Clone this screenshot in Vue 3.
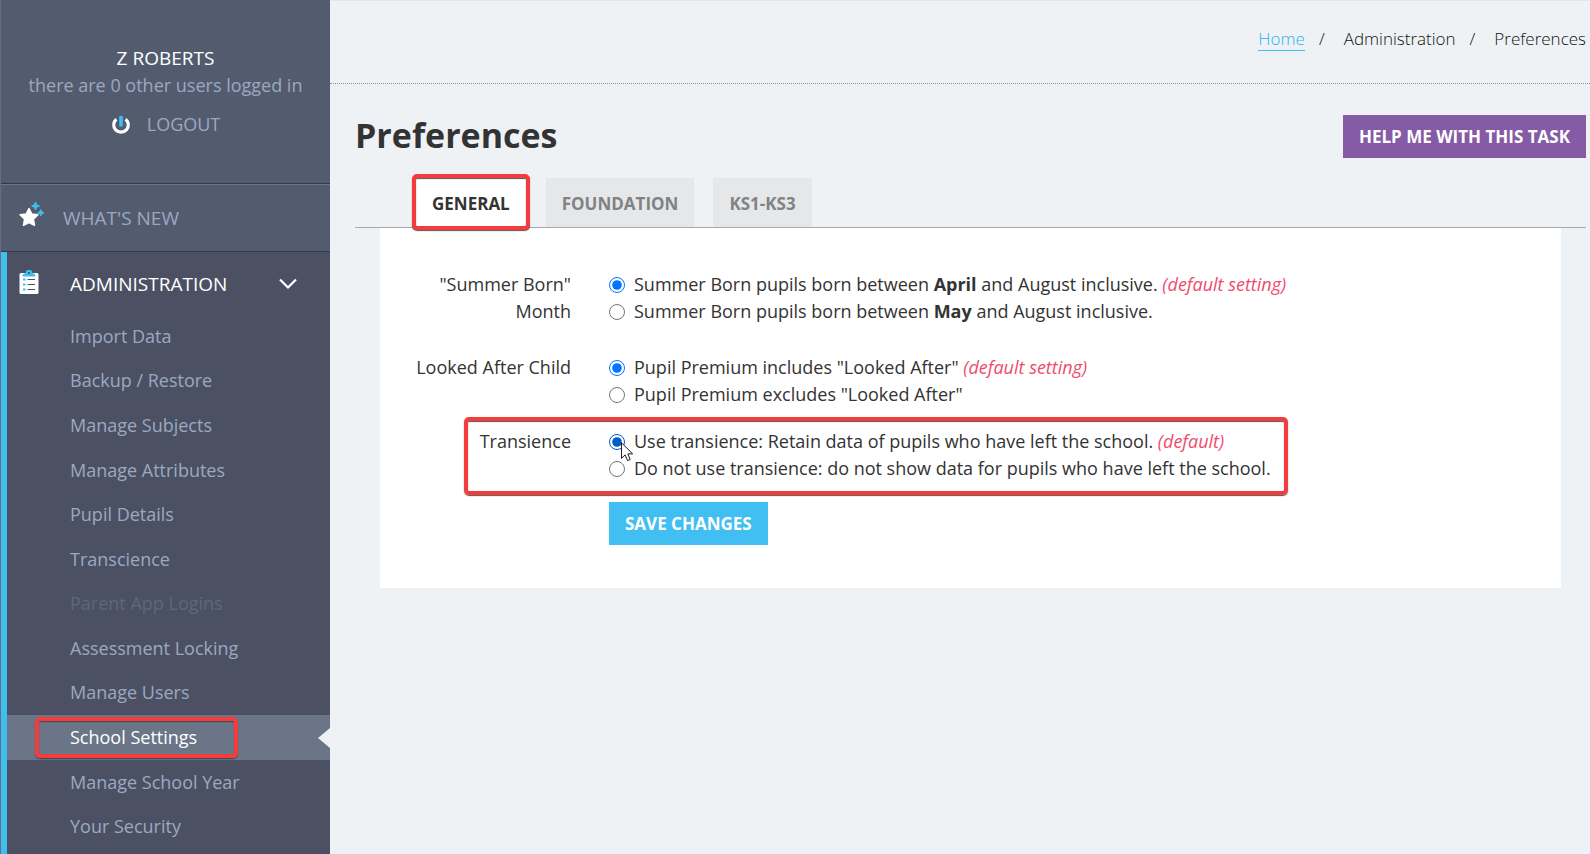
<script setup>
import { ref } from 'vue'

const menu = [
  { label: 'Import Data' },
  { label: 'Backup / Restore' },
  { label: 'Manage Subjects' },
  { label: 'Manage Attributes' },
  { label: 'Pupil Details' },
  { label: 'Transcience' },
  { label: 'Parent App Logins', disabled: true },
  { label: 'Assessment Locking' },
  { label: 'Manage Users' },
  { label: 'School Settings', active: true },
  { label: 'Manage School Year' },
  { label: 'Your Security' },
]

const tabs = ['GENERAL', 'FOUNDATION', 'KS1-KS3']
const activeTab = ref('GENERAL')
const summer = ref('april')
const looked = ref('includes')
const transience = ref('use')
</script>

<template>
  <div class="layout">
    <aside class="sidebar">
      <div class="user">
        <div class="user-name">Z ROBERTS</div>
        <div>there are 0 other users logged in</div>
        <a class="logout" href="#">
          <svg width="20" height="20" viewBox="0 0 20 20" aria-hidden="true">
            <path d="M5.400 4.200a7.300 7.300 0 1 0 9.200 0" fill="none" stroke="#fff" stroke-width="3.200" />
            <path d="M10 1v10.500" fill="none" stroke="#3fbff0" stroke-width="3.600" />
          </svg>
          <span>LOGOUT</span>
        </a>
      </div>

      <a class="news" href="#">
        <svg width="26" height="26" viewBox="0 0 26 26" aria-hidden="true">
          <path d="M10 7.500l2.700 5.400 6.200.9-4.500 4.300 1.100 6.200L10 21.500l-5.500 2.800 1.100-6.200L1.100 13.800l6.200-.9z" fill="#fff" stroke="#fff" stroke-width="1.500" stroke-linejoin="round" />
          <path d="M16.500 1l1.200 2.800 2.800 1.200-2.800 1.200-1.200 2.800-1.200-2.800L12.500 5l2.800-1.200zM21.800 8.600l1 2.200 2.200 1-2.200 1-1 2.200-1-2.200-2.200-1 2.200-1z" fill="#3fbff0" stroke="#3fbff0" />
        </svg>
        <span>WHAT'S NEW</span>
      </a>

      <nav class="admin">
        <button class="admin-head" type="button" aria-expanded="true">
          <svg class="clipboard" width="20" height="26" viewBox="0 0 20 26" aria-hidden="true">
            <rect x="0.500" y="4" width="19" height="21" rx="1.500" fill="#fff" />
            <path d="M3.500 7.500c0-2.300 1.500-3 3.200-3.500a3.300 3.300 0 0 1 6.600 0c1.700.5 3.200 1.200 3.200 3.500z" fill="#3fbff0" />
            <circle cx="10" cy="4" r="1.100" fill="#4b5162" />
            <path d="M8.500 10.500H16M8.500 15.500H16M8.500 20.500H16" stroke="#4b5162" />
            <path d="M4 10.500h2.500M4 15.500h2.500M4 20.500h2.500" stroke="#3fbff0" stroke-width="2.200" />
          </svg>
          <span>ADMINISTRATION</span>
          <svg class="chevron" width="18" height="12" viewBox="0 0 18 12" aria-hidden="true">
            <path d="M1 1.500l8 8 8-8" fill="none" stroke="#fff" stroke-width="2.200" />
          </svg>
        </button>
        <ul class="menu">
          <li v-for="item in menu" :key="item.label" :class="{ active: item.active }">
            <a href="#" :class="{ disabled: item.disabled }">{{ item.label }}</a>
          </li>
        </ul>
      </nav>
    </aside>

    <main class="main">
      <nav class="crumbs" aria-label="Breadcrumb">
        <a href="#">Home</a><span class="slash">/</span>
        <span>Administration</span><span class="slash">/</span>
        <span>Preferences</span>
      </nav>

      <div class="content">
        <header class="title-row">
          <h1>Preferences</h1>
          <button class="button help" type="button">HELP ME WITH THIS TASK</button>
        </header>

        <div class="tabs">
          <button
            v-for="tab in tabs"
            :key="tab"
            type="button"
            :class="['tab', { selected: tab === activeTab }]"
            @click="activeTab = tab"
          >{{ tab }}</button>
        </div>

        <form class="panel" @submit.prevent>
          <div class="row" role="radiogroup" aria-labelledby="summer-label">
            <div id="summer-label" class="row-label">"Summer Born" Month</div>
            <div class="options">
              <label><input v-model="summer" type="radio" name="summer" value="april"><span>Summer Born pupils born between <b>April</b> and August inclusive. <em>(default setting)</em></span></label>
              <label><input v-model="summer" type="radio" name="summer" value="may"><span>Summer Born pupils born between <b>May</b> and August inclusive.</span></label>
            </div>
          </div>
          <div class="row" role="radiogroup" aria-labelledby="looked-label">
            <div id="looked-label" class="row-label">Looked After Child</div>
            <div class="options">
              <label><input v-model="looked" type="radio" name="looked" value="includes"><span>Pupil Premium includes "Looked After" <em>(default setting)</em></span></label>
              <label><input v-model="looked" type="radio" name="looked" value="excludes"><span>Pupil Premium excludes "Looked After"</span></label>
            </div>
          </div>
          <div class="row marked" role="radiogroup" aria-labelledby="transience-label">
            <div id="transience-label" class="row-label">Transience</div>
            <div class="options">
              <label class="hovered"><input v-model="transience" type="radio" name="transience" value="use"><span>Use transience: Retain data of pupils who have left the school. <em>(default)</em></span>
                <svg class="cursor" width="13" height="20" viewBox="0 0 13 20" aria-hidden="true">
                  <path d="M.5.8v15.500l3.600-3.400 2.500 5.700 2.600-1.100-2.400-5.600h4.900z" fill="#fff" stroke="#1a1a2a" />
                </svg>
              </label>
              <label><input v-model="transience" type="radio" name="transience" value="none"><span>Do not use transience: do not show data for pupils who have left the school.</span></label>
            </div>
          </div>
          <button class="button save" type="submit">SAVE CHANGES</button>
        </form>
      </div>
    </main>
  </div>
</template>

<style>
html,
body {
  margin: 0;
  background: #eef2f5;
}
</style>

<style scoped>
* {
  box-sizing: border-box;
}

.layout {
  display: flex;
  height: 100vh;
  overflow: hidden;
  font-family: "Open Sans", sans-serif;
  font-size: 18px;
  line-height: 27px;
  color: #333;
}

a {
  color: inherit;
  text-decoration: none;
}

button {
  border: 0;
  font-family: inherit;
  color: inherit;
  cursor: pointer;
}

.sidebar {
  flex: 0 0 330px;
  border-left: 1px solid #656e80;
  background: #535c6f;
  color: #9ba8c2;
}

.user {
  height: 184px;
  padding-top: 44px;
  border-bottom: 1px solid #2f3b4c;
  text-align: center;
}

.user-name {
  color: #fff;
  font-size: 19px;
  line-height: 28px;
}

.logout {
  display: flex;
  justify-content: center;
  align-items: center;
  gap: 16px;
  margin-top: 12px;
}

.news {
  display: flex;
  align-items: center;
  gap: 18px;
  height: 68px;
  padding-left: 18px;
  border-top: 1px solid #6b7588;
  border-bottom: 1px solid #2f3b4c;
  font-size: 19px;
}

.news svg {
  margin-bottom: 8px;
}

.admin {
  border-left: 6px solid #3fbff0;
  background: #4b5162;
}

.admin-head {
  display: flex;
  align-items: center;
  width: 100%;
  height: 63px;
  padding: 1px 33px 0 12px;
  background: none;
  color: #fff;
  font-size: 19px;
  line-height: 27px;
  text-align: left;
}

.admin-head span {
  margin-left: 31px;
}

.clipboard {
  margin-bottom: 4px;
}

.chevron {
  margin-left: auto;
}

.menu {
  display: grid;
  grid-auto-rows: 1fr;
  min-height: 535px;
  margin: -1px 0 0;
  padding: 0 0 30px;
  box-sizing: content-box;
  list-style: none;
}

.menu li {
  position: relative;
  display: flex;
  align-items: center;
  padding-left: 28px;
}

.menu a {
  padding: 4px 35px;
}

.menu .active {
  background: #6a7588;
  color: #fff;
}

.menu .active a {
  border: 4px solid #f53b3b;
  border-radius: 5px;
  padding: 3px 37px 3px 31px;
  box-shadow: 0 1px 1px #444, inset 0 1px 1px #444;
}

.menu .active::after {
  content: "";
  position: absolute;
  right: 0;
  border: solid transparent;
  border-width: 10px 12px 10px 0;
  border-right-color: #eef2f5;
}

.menu .disabled {
  color: #5f677a;
}

.main {
  flex: 1;
  min-width: 0;
  border-top: 1px solid #e2e5e9;
}

.crumbs {
  display: flex;
  justify-content: flex-end;
  align-items: flex-start;
  height: 83px;
  padding: 26px 4px 0 0;
  border-bottom: 1px dotted #8d9094;
  color: #111;
  font-size: 17px;
  font-weight: 300;
  line-height: 24px;
}

.crumbs a {
  height: 24px;
  border-bottom: 1px solid #3fbff0;
  color: #1fb2ee;
}

.slash {
  margin: 0 19px 0 14px;
}

.content {
  padding: 31px 4px 0 25px;
}

.title-row {
  display: flex;
  justify-content: space-between;
  align-items: flex-start;
  height: 63px;
}

h1 {
  margin: 0;
  font-size: 34px;
  line-height: 40px;
}

.button {
  height: 43px;
  padding: 1px 16px 0;
  color: #fff;
  font-size: 17px;
  font-weight: 700;
  line-height: 24px;
}

.help {
  background: #855ba5;
}

.tabs {
  display: flex;
  align-items: flex-end;
  gap: 19px;
  height: 50px;
  padding-left: 61px;
  border-bottom: 1px solid #a7a9ac;
}

.tab {
  height: 49px;
  padding: 3px 16px 0;
  background: #e6e7e8;
  color: #808285;
  font-size: 17px;
  font-weight: 700;
  line-height: 24px;
}

.tab.selected {
  position: relative;
  height: 56px;
  margin: 0 -3px -3px -4px;
  padding: 4px 16px 0;
  border: 4px solid #f53b3b;
  border-radius: 5px;
  background: #fff;
  color: #333;
  box-shadow: 0 1px 1px #555, inset 0 1px 1px #555;
}

.panel {
  margin: 0 25px;
  padding: 43px 35px;
  background: #fff;
}

.row {
  display: flex;
  gap: 38px;
  margin-bottom: 29px;
}

.row-label {
  flex: 0 0 156px;
  text-align: right;
}

.options label {
  position: relative;
  display: flex;
  align-items: center;
  width: fit-content;
}

.options input {
  width: 16px;
  height: 16px;
  margin: 0 9px 0 0;
  accent-color: #0075ff;
}

.options .hovered input {
  accent-color: #005cc8;
}

em {
  color: #ef4b6c;
}

.marked {
  width: fit-content;
  margin: -20px 0 7px 49px;
  padding: 7px 13px 9px 0;
  border: 4px solid #f53b3b;
  border-radius: 5px;
  box-shadow: 0 1px 1px #555, inset 0 1px 1px #555;
}

.marked .row-label {
  flex-basis: 103px;
}

.cursor {
  position: absolute;
  left: 12px;
  top: 14px;
}

.save {
  display: block;
  margin-left: 194px;
  background: #41bff2;
}
</style>
